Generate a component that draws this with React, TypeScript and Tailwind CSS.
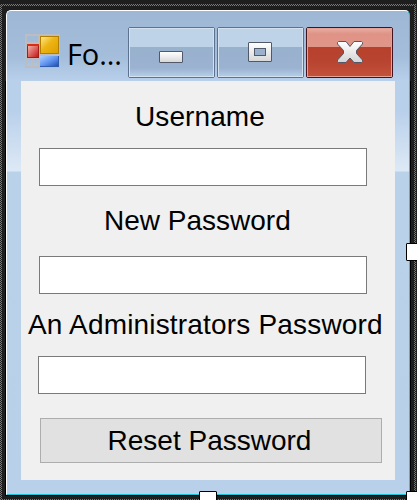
import type { ReactNode } from "react";

const dots = "bg-[repeating-conic-gradient(#787878_0_25%,#1e1e1e_0_50%)] bg-[length:2px_2px]";

function FormIcon() {
  return (
    <svg className="mt-[23px] shrink-0" width="35" height="34" viewBox="0 0 35 34" shapeRendering="crispEdges">
      <defs>
        <linearGradient id="gold" x1="0" y1="0" x2="1" y2="1">
          <stop offset="0" stopColor="#ffe98a" />
          <stop offset=".45" stopColor="#ecb414" />
          <stop offset="1" stopColor="#dda000" />
        </linearGradient>
        <linearGradient id="ruby" x1="0" y1="0" x2="1" y2="1">
          <stop offset="0" stopColor="#f3b0a9" />
          <stop offset="1" stopColor="#c51717" />
        </linearGradient>
        <linearGradient id="azure" x1="0" y1="0" x2="1" y2="1">
          <stop offset="0" stopColor="#acd0ff" />
          <stop offset=".55" stopColor="#5c91f0" />
          <stop offset="1" stopColor="#214fae" />
        </linearGradient>
      </defs>
      <path d="M1 1H34V33H1Z M14 1V33 M1 9H14 M1 24H14 M14 21H34" fill="none" stroke="#bdbdc1" strokeWidth="2" />
      <path d="M7.500 24V33" fill="none" stroke="#bdbdc1" />
      <rect x="15" y="2" width="19" height="18" fill="#b27e00" />
      <rect x="16" y="3" width="17" height="16" fill="url(#gold)" />
      <rect x="2" y="10" width="12" height="14" fill="#a51b15" />
      <rect x="2" y="10" width="12" height="2" fill="#db2d10" />
      <rect x="3" y="12" width="10" height="11" fill="url(#ruby)" />
      <rect x="15" y="22" width="19" height="11" fill="#315cae" />
      <rect x="15" y="22" width="18" height="10" fill="url(#azure)" />
    </svg>
  );
}

function CaptionButton({ close = false, children }: { close?: boolean; children: ReactNode }) {
  const outer = close ? "border-[#421420]" : "border-[#5d728e]";
  const inner = close
    ? "border-[#e6a197] bg-[linear-gradient(#e5aa9f_0,#df9386_5px,#df9689_18px,#b6402b_18px,#b94632_35px,#c3533b_48px)]"
    : "border-[#d3e1f0] bg-[linear-gradient(#bed3e8_0,#bed3e8_18px,#98b1cd_18px,#9bb2d0_39px,#b6cfe9_48px)]";
  return (
    <button className={`block h-[51px] w-[87px] rounded-[2px] border ${outer}`}>
      <span className={`flex h-full w-full items-center justify-center border pr-px pb-px ${inner}`}>{children}</span>
    </button>
  );
}

function Field({ className = "" }: { className?: string }) {
  return <input className={`block h-[38px] w-[328px] border border-[#7a7a7a] bg-white ${className}`} />;
}

function Handle({ className }: { className: string }) {
  return <div className={`absolute h-[18px] w-[18px] rounded-[1px] border border-black bg-white ${className}`} />;
}

export default function App() {
  return (
    <div className="relative h-[500px] w-[417px] overflow-hidden bg-[#1e1e1e] pt-1 font-['Liberation_Sans',Arial,sans-serif] text-black">
      <div className={`h-[497px] w-[416px] p-[2px] ${dots}`}>
        <div className="h-[493px] bg-[#1e1e1e] pt-[3px] pl-[3px]">
          <div className="h-[487px] w-[406px] rounded-t-[6px] bg-[linear-gradient(#1e1e1e_0,#1e1e1e_72px,#000_72px)] p-px">
            <div className="flex h-[485px] flex-col rounded-t-[5px] border border-t-white border-r-[#36bfd2] border-b-[#16c6d8] border-l-white bg-[linear-gradient(#9db7d4_0,#a3bdda_45px,#b9d0eb_70px,#b9d0eb_100px,#dce8f5_158px,#dce8f5_160px,#b9d1e9_161px,#b9d0ea_100%)]">
              <header className="flex h-[70px] shrink-0 pl-[18px]">
                <FormIcon />
                <h1 className="mt-[23px] ml-[7px] w-[61px] font-['Open_Sans','Noto_Sans',sans-serif] text-[29px] leading-[40px] tracking-[-0.1px] whitespace-nowrap">Fo...</h1>
                <div className="mt-4 flex gap-[2px]">
                  <CaptionButton>
                    <span className="mt-[9px] h-3 w-6 rounded-[1px] border border-[#51586a] bg-linear-to-b from-white to-[#d8d8d8]" />
                  </CaptionButton>
                  <CaptionButton>
                    <span className="flex h-5 w-6 items-center justify-center rounded-[1px] border border-[#51586a] bg-linear-to-b from-white to-[#d8d8d8]">
                      <span className="h-2 w-3 border border-[#51586a] bg-[#9bb2ce]" />
                    </span>
                  </CaptionButton>
                  <CaptionButton close>
                    <svg className="ml-px" width="26" height="22" viewBox="0 0 26 22">
                      <defs>
                        <linearGradient id="cross" x2="0" y2="1">
                          <stop stopColor="#fff" />
                          <stop offset="1" stopColor="#d4d4d4" />
                        </linearGradient>
                      </defs>
                      <path d="M1.500.500H9L13 5.500 17 .500H24.500L25.500 1.500V3L19.500 9.500V12.500L25.500 19V20.500L24.500 21.500H17L13 17 9 21.500H1.500L.5 20.500V19L6.500 12.500V9.500L.5 3V1.500Z" fill="url(#cross)" stroke="#535666" />
                    </svg>
                  </CaptionButton>
                </div>
              </header>
              <main className="mx-[14px] h-[399px] shrink-0 bg-[#f0f0f0] text-[28px] leading-8">
                <label className="block pt-5 pl-[114px] tracking-[0.1px] whitespace-nowrap">Username</label>
                <Field className="mt-[15px] ml-[18px]" />
                <label className="block pt-[19px] pl-[83px] whitespace-nowrap">New Password</label>
                <Field className="mt-[19px] ml-[18px]" />
                <label className="block pt-[15px] pl-[7px] tracking-[0.18px] whitespace-nowrap">An Administrators Password</label>
                <Field className="mt-[15px] ml-[17px]" />
                <button className="mt-6 ml-[19px] block h-[45px] w-[342px] border border-[#adadad] bg-[#e1e1e1] pr-[3px]">Reset Password</button>
              </main>
            </div>
          </div>
        </div>
      </div>
      <Handle className="top-[243px] left-[406px]" />
      <Handle className="top-[491px] left-[199px]" />
      <Handle className="top-[491px] left-[406px]" />
    </div>
  );
}
